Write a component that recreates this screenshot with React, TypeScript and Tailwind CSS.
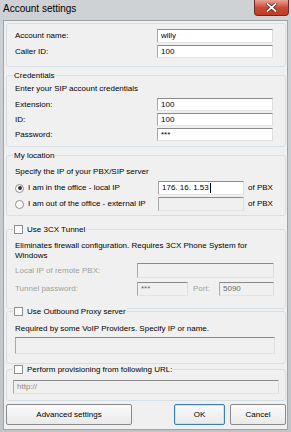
import React from "react";

function Field({
  value,
  disabled,
  className = "",
  caret,
}: {
  value?: string;
  disabled?: boolean;
  className?: string;
  caret?: boolean;
}) {
  return (
    <div
      className={`flex items-center px-[3px] border border-t-[#8a8a8a] border-l-[#a9a9a9] border-r-[#dedede] border-b-[#e4e4e4] ${
        disabled ? "bg-[#f0f0f0] text-[#6d6d6d]" : "bg-white text-black"
      } ${className}`}
    >
      <span>{value}</span>
      {caret && <span className="w-px h-[10px] bg-black ml-px" />}
    </div>
  );
}

function Check() {
  return <span className="inline-block w-[9px] h-[9px] bg-white border border-[#8e8f8f] shrink-0" />;
}

function Radio({ checked }: { checked?: boolean }) {
  return (
    <span className="w-[9px] h-[9px] rounded-full bg-white border border-[#8e8f8f] flex items-center justify-center shrink-0">
      {checked && <span className="w-[4px] h-[4px] rounded-full bg-[#333]" />}
    </span>
  );
}

function Group({
  title,
  checkbox,
  className = "",
  children,
}: {
  title?: string;
  checkbox?: boolean;
  className?: string;
  children: React.ReactNode;
}) {
  return (
    <div className={`relative shrink-0 border border-[#d5dfe5] rounded-[3px] ${className}`}>
      {title && (
        <div className="absolute -top-[6px] left-[6px] flex items-center gap-[4px] bg-[#f0f0f0] px-[1px] leading-[11px]">
          {checkbox && <Check />}
          <span>{title}</span>
        </div>
      )}
      {children}
    </div>
  );
}

function Button({ label, primary, className = "" }: { label: string; primary?: boolean; className?: string }) {
  return (
    <div
      className={`h-[21px] flex items-center justify-center rounded-[2px] border bg-gradient-to-b from-[#fbfbfb] to-[#e9e9e9] ${
        primary ? "border-[#3c7fb1] shadow-[inset_0_0_0_1px_#c7e2f6]" : "border-[#8a8a8a]"
      } ${className}`}
    >
      {label}
    </div>
  );
}

export default function App() {
  return (
    <div className="w-[291px] h-[432px] overflow-hidden flex flex-col bg-gradient-to-b from-[#cfd2d5] to-[#c2c5c8] font-['Liberation_Sans',Arial,sans-serif] text-[8px] text-black">
      {/* Title bar */}
      <div className="relative h-[20px] shrink-0 flex items-center pl-[3px] pb-[4px] text-[10px] text-black">
        Account settings
        <div className="absolute top-0 right-[2px] w-[35px] h-[16px] rounded-b-[4px] border border-t-0 border-[#6b2a22] bg-gradient-to-b from-[#e8a295] via-[#cb4b36] to-[#c23a25] flex items-center justify-center">
          <svg width="11" height="9" viewBox="0 0 11 9">
            <path d="M1.5 1 L9.5 8 M9.5 1 L1.5 8" stroke="#4a1a14" strokeWidth="3.2" strokeLinecap="square" />
            <path d="M1.5 1 L9.5 8 M9.5 1 L1.5 8" stroke="#ffffff" strokeWidth="1.8" strokeLinecap="square" />
          </svg>
        </div>
      </div>

      {/* Body */}
      <div className="flex-1 mx-[3px] mb-[2px] bg-[#f0f0f0] border border-[#9fa4a9] pl-[2px] pr-[1px] pt-[2px] flex flex-col">
        <Group className="px-[8px] pt-[5px] pb-[8px] flex flex-col gap-[2px]">
          <div className="flex items-center h-[14px]">
            <span className="flex-1">Account name:</span>
            <Field value="willy" className="w-[116px] h-[14px] mr-[4px]" />
          </div>
          <div className="flex items-center h-[13px]">
            <span className="flex-1">Caller ID:</span>
            <Field value="100" className="w-[116px] h-[13px] mr-[4px]" />
          </div>
        </Group>

        <Group title="Credentials" className="mt-[8px] px-[8px] pt-[7px] pb-[5px] flex flex-col gap-[2px]">
          <div className="h-[12px] leading-[12px] mb-[1px]">Enter your SIP account credentials</div>
          <div className="flex items-center h-[13px]">
            <span className="flex-1">Extension:</span>
            <Field value="100" className="w-[116px] h-[13px] mr-[4px]" />
          </div>
          <div className="flex items-center h-[13px]">
            <span className="flex-1">ID:</span>
            <Field value="100" className="w-[116px] h-[13px] mr-[4px]" />
          </div>
          <div className="flex items-center h-[13px]">
            <span className="flex-1">Password:</span>
            <Field value="***" className="w-[116px] h-[13px] mr-[4px]" />
          </div>
        </Group>

        <Group title="My location" className="mt-[8px] px-[8px] pt-[10px] pb-[4px] flex flex-col gap-[2px]">
          <div className="h-[12px] leading-[12px] mb-[1px]">Specify the IP of your PBX/SIP server</div>
          <div className="flex items-center h-[14px]">
            <div className="flex items-center gap-[4px] w-[143px]">
              <Radio checked />
              <span>I am in the office - local IP</span>
            </div>
            <Field value="176. 16. 1.53" caret className="w-[86px] h-[14px]" />
            <span className="ml-[4px]">of PBX</span>
          </div>
          <div className="flex items-center h-[14px]">
            <div className="flex items-center gap-[4px] w-[143px]">
              <Radio />
              <span>I am out of the office - external IP</span>
            </div>
            <Field disabled className="w-[86px] h-[14px]" />
            <span className="ml-[4px]">of PBX</span>
          </div>
        </Group>

        <Group title="Use 3CX Tunnel" checkbox className="mt-[13px] px-[8px] pt-[11px] pb-[12px] flex flex-col">
          <div className="leading-[10px] whitespace-nowrap">
            Eliminates firewall configuration. Requires 3CX Phone System for
            <br />
            Windows
          </div>
          <div className="flex items-center h-[15px] mt-[2px] text-[#a0a0a0]">
            <span className="w-[122px]">Local IP of remote PBX:</span>
            <Field disabled className="w-[137px] h-[15px]" />
          </div>
          <div className="flex items-center h-[14px] mt-[4px] text-[#a0a0a0]">
            <span className="w-[122px]">Tunnel password:</span>
            <Field disabled value="***" className="w-[51px] h-[14px]" />
            <span className="ml-[5px] w-[26px]">Port:</span>
            <Field disabled value="5090" className="w-[55px] h-[14px]" />
          </div>
        </Group>

        <Group title="Use Outbound Proxy server" checkbox className="mt-[2px] px-[8px] pt-[11px] pb-[9px] flex flex-col">
          <div className="leading-[12px]">Required by some VoIP Providers. Specify IP or name.</div>
          <Field disabled className="h-[17px] mt-[2px] mr-[2px]" />
        </Group>

        <Group title="Perform provisioning from following URL:" checkbox className="mt-[5px] px-[6px] pt-[10px] pb-[6px] flex flex-col">
          <Field disabled value="http://" className="h-[14px] text-[#8a8a8a]" />
        </Group>

        <div className="flex items-center mt-[3px] shrink-0">
          <Button label="Advanced settings" className="w-[126px]" />
          <Button label="OK" primary className="w-[51px] ml-auto" />
          <Button label="Cancel" className="w-[56px] ml-[5px]" />
        </div>
      </div>
    </div>
  );
}
